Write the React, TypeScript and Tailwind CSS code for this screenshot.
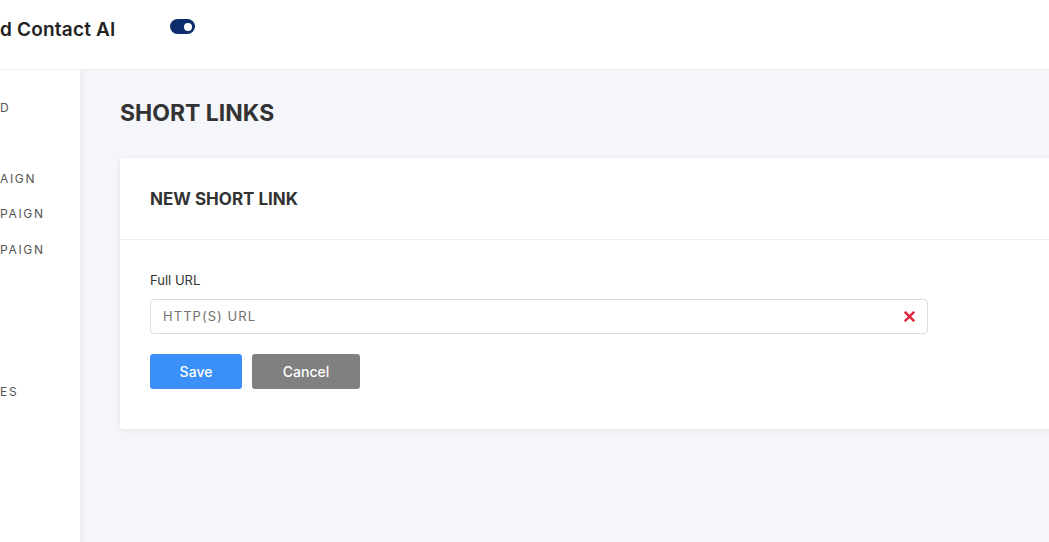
import React from "react";

const font = { fontFamily: "Inter, 'Open Sans', sans-serif" };

export default function App() {
  return (
    <div className="w-[1049px] h-[542px] overflow-hidden bg-[#f5f6fa] text-[#333]" style={font}>
      <header className="h-[70px] bg-white border-b border-[#eceef2] flex items-center relative z-10">
        <div className="text-[19px] font-semibold text-[#222] whitespace-nowrap w-[170px] -mt-[8px] tracking-[0.01em]">
          d Contact AI
        </div>
        <div className="-mt-[16px] w-[25px] h-[15px] rounded-full bg-[#0d2d6c] flex items-center justify-end pr-[3px]">
          <div className="w-[8px] h-[8px] rounded-full bg-white" />
        </div>
      </header>
      <div className="flex h-[472px]">
        <aside className="w-[80px] shrink-0 bg-white relative z-[1] shadow-[2px_0_6px_rgba(0,0,0,0.06)] text-[12px] leading-[16px] tracking-[0.14em] text-[#555] whitespace-nowrap">
          <div className="mt-[30px]">D</div>
          <div className="mt-[55px]">AIGN</div>
          <div className="mt-[19px]">PAIGN</div>
          <div className="mt-[20px]">PAIGN</div>
          <div className="mt-[126px]">ES</div>
        </aside>
        <main className="flex-1 min-w-0 pl-[40px] pt-[28px]">
          <h1 className="text-[23px] font-bold text-[#333] leading-[30px]">SHORT LINKS</h1>
          <div className="mt-[30px] w-[1000px] bg-white rounded-[4px] shadow-[0_1px_6px_rgba(0,0,0,0.08)]">
            <div className="px-[30px] pt-[2px] h-[82px] flex items-center border-b border-[#ebedf0]">
              <h2 className="text-[17px] font-bold text-[#333]">NEW SHORT LINK</h2>
            </div>
            <div className="px-[30px] pt-[30px] pb-[40px]">
              <label className="block text-[13px] text-[#333] leading-[20px]">Full URL</label>
              <div className="mt-[9px] w-[778px] h-[35px] border border-[#dcdcdc] rounded-[4px] flex items-center px-[12px]">
                <span className="flex-1 text-[13px] tracking-[0.08em] text-[#76706b]">HTTP(S) URL</span>
                <svg width="11" height="11" viewBox="0 0 10 10">
                  <path d="M1.5 1.5 L8.5 8.5 M8.5 1.5 L1.5 8.5" stroke="#e0263f" strokeWidth="2.2" strokeLinecap="square" />
                </svg>
              </div>
              <div className="mt-[20px] flex gap-[10px]">
                <button className="w-[92px] h-[35px] rounded-[3px] bg-[#3a90f8] text-white text-[14px] font-medium">Save</button>
                <button className="w-[108px] h-[35px] rounded-[3px] bg-[#808080] text-white text-[14px] font-medium">Cancel</button>
              </div>
            </div>
          </div>
        </main>
      </div>
    </div>
  );
}
